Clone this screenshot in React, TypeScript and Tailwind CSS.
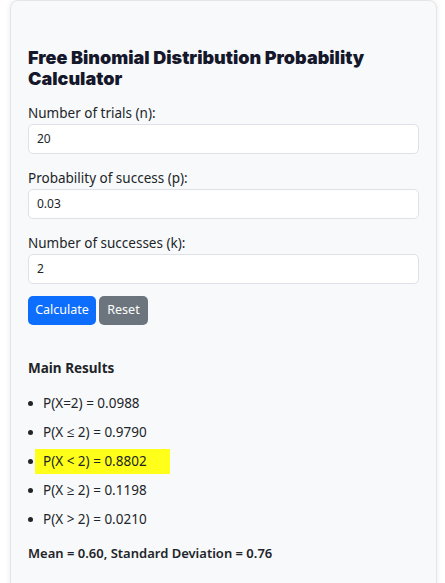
import React from "react";

const body = { fontFamily: '"Noto Sans", "Open Sans", sans-serif' };

function Field({ label, value, mb }: { label: string; value: string; mb: string }) {
  return (
    <div className={mb}>
      <div className="text-[13.5px] leading-[20px] text-[#212529] mb-[1px]">{label}</div>
      <div className="h-[30px] bg-white border border-[#dee2e6] rounded-[5px] flex items-center pl-[8px] text-[12px] text-[#212529]">
        {value}
      </div>
    </div>
  );
}

export default function App() {
  const results = [
    { t: "P(X=2) = 0.0988", hl: false },
    { t: "P(X \u2264 2) = 0.9790", hl: false },
    { t: "P(X < 2) = 0.8802", hl: true },
    { t: "P(X \u2265 2) = 0.1198", hl: false },
    { t: "P(X > 2) = 0.0210", hl: false },
  ];
  return (
    <div className="w-[445px] h-[583px] bg-white overflow-hidden" style={body}>
      <div className="mx-[10px] w-[427px] h-[600px] bg-[#f8f9fa] border border-[#e3e5e8] rounded-[8px] shadow-[0_0_6px_rgba(0,0,0,0.08)] px-[17px] pt-[46px]">
        <h1
          className="text-[18px] leading-[21px] font-black text-[#15172b] mb-[14px]"
          style={{ fontFamily: 'Inter, "Noto Sans", sans-serif' }}
        >
          Free Binomial Distribution Probability Calculator
        </h1>
        <Field label="Number of trials (n):" value="20" mb="mb-[14px]" />
        <Field label="Probability of success (p):" value="0.03" mb="mb-[14px]" />
        <Field label="Number of successes (k):" value="2" mb="mb-[12px]" />
        <div className="flex gap-[3px]">
          <div className="h-[29px] w-[68px] rounded-[5px] bg-[#0d6efd] text-white text-[12.5px] flex items-center justify-center">
            Calculate
          </div>
          <div className="h-[29px] w-[49px] rounded-[5px] bg-[#6c757d] text-white text-[12.5px] flex items-center justify-center">
            Reset
          </div>
        </div>
        <div className="mt-[33px] text-[13.5px] leading-[20px] font-bold text-[#212529]">Main Results</div>
        <ul className="mt-[11px]">
          {results.map((r) => (
            <li key={r.t} className="h-[29px] flex items-center text-[13.5px] text-[#212529]">
              <span className="w-[5px] h-[5px] rounded-full bg-[#212529] ml-[0px] mr-[2px]" />
              {r.hl ? (
                <span className="bg-[#ffff1a] h-[25px] w-[135px] flex items-center pl-[8px]">{r.t}</span>
              ) : (
                <span className="pl-[8px]">{r.t}</span>
              )}
            </li>
          ))}
        </ul>
        <div className="mt-[9px] text-[13px] leading-[20px] font-semibold text-[#212529]">
          Mean = 0.60, Standard Deviation = 0.76
        </div>
      </div>
    </div>
  );
}
